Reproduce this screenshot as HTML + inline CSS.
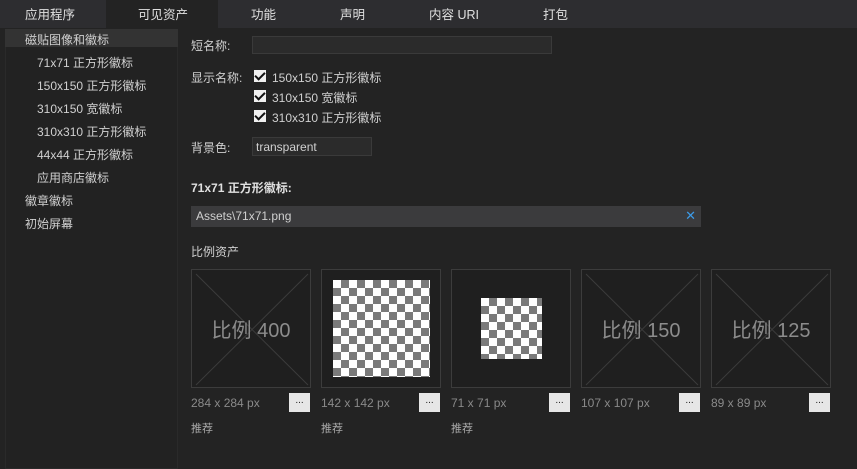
<!DOCTYPE html><html><head><meta charset="utf-8"><style>
*{margin:0;padding:0;box-sizing:border-box}
body{width:857px;height:469px;background:#232323;color:#d0d0d0;font:12px "Liberation Sans","Noto Sans CJK SC",sans-serif;position:relative;overflow:hidden}
.a{position:absolute;white-space:nowrap}
.tabs{position:absolute;left:0;top:0;width:857px;height:28px;background:#2d2d30}
.tab{position:absolute;top:0;height:28px;line-height:30px;font-size:12.5px;color:#e0e0e0}
.left{position:absolute;left:5px;top:29px;width:173px;height:440px;border:1px solid #2a2a2a;background:#222}
.sel{position:absolute;left:5px;top:29px;width:173px;height:18px;background:#333}
.in{position:absolute;background:#2b2b2b;border:1px solid #3a3a3a}
.cb{position:absolute;width:12px;height:12px;background:#f0f0f0}
.cb:after{content:"";position:absolute;left:3px;top:0px;width:4px;height:8px;border:solid #111;border-width:0 2px 2px 0;transform:rotate(45deg)}
.tile{position:absolute;top:269px;width:120px;height:119px;border:1px solid #3c3c3c;background:#1f1f1f;overflow:hidden}
.chk{position:absolute;background-color:#fff;background-image:linear-gradient(45deg,#7a7a7a 25%,transparent 25%,transparent 75%,#7a7a7a 75%),linear-gradient(45deg,#7a7a7a 25%,transparent 25%,transparent 75%,#7a7a7a 75%);background-size:16px 16px;background-position:0 0,8px 8px}
.btn{position:absolute;top:393px;width:21px;height:19px;background:#e6e6e6;color:#222;font-size:10px;text-align:center;line-height:16px}
.lbl{position:absolute;top:396px;color:#8a8a8a;font-size:12px}
.rec{position:absolute;top:420px;color:#aaa;font-size:11px}
.big{position:absolute;left:0;top:44px;width:118px;text-align:center;font-size:20px;color:#8c8c8c}
</style></head><body>
<div class="tabs"></div>
<div class="a" style="left:106px;top:0;width:112px;height:29px;background:#232323"></div>
<div class="tab" style="left:25px">应用程序</div>
<div class="tab" style="left:138px">可见资产</div>
<div class="tab" style="left:251px">功能</div>
<div class="tab" style="left:340px">声明</div>
<div class="tab" style="left:429px">内容 URI</div>
<div class="tab" style="left:543px">打包</div>
<div class="left"></div><div class="sel"></div>
<div class="a" style="left:25px;top:31px">磁贴图像和徽标</div>
<div class="a" style="left:37px;top:54px">71x71 正方形徽标</div>
<div class="a" style="left:37px;top:77px">150x150 正方形徽标</div>
<div class="a" style="left:37px;top:100px">310x150 宽徽标</div>
<div class="a" style="left:37px;top:123px">310x310 正方形徽标</div>
<div class="a" style="left:37px;top:146px">44x44 正方形徽标</div>
<div class="a" style="left:37px;top:169px">应用商店徽标</div>
<div class="a" style="left:25px;top:192px">徽章徽标</div>
<div class="a" style="left:25px;top:215px">初始屏幕</div>
<div class="a" style="left:191px;top:37px">短名称:</div>
<div class="in" style="left:252px;top:36px;width:300px;height:18px"></div>
<div class="a" style="left:191px;top:69px">显示名称:</div>
<div class="cb" style="left:254px;top:70px"></div><div class="a" style="left:272px;top:69px">150x150 正方形徽标</div>
<div class="cb" style="left:254px;top:90px"></div><div class="a" style="left:272px;top:89px">310x150 宽徽标</div>
<div class="cb" style="left:254px;top:110px"></div><div class="a" style="left:272px;top:109px">310x310 正方形徽标</div>
<div class="a" style="left:191px;top:139px">背景色:</div>
<div class="in" style="left:252px;top:137px;width:120px;height:19px;padding:2px 3px">transparent</div>
<div class="a" style="left:191px;top:179px;font-weight:bold;color:#e0e0e0">71x71 正方形徽标:</div>
<div class="a" style="left:191px;top:206px;width:510px;height:21px;background:#3b3b3d;padding:3px 5px">Assets\71x71.png<span style="position:absolute;right:5px;top:2px;color:#3c9be8;font-size:13px">✕</span></div>
<div class="a" style="left:191px;top:243px">比例资产</div>
<div class="tile" style="left:191px"><svg width="120" height="119" style="position:absolute;left:0;top:0"><line x1="4" y1="4" x2="116" y2="115" stroke="#3c3c3c"/><line x1="116" y1="4" x2="4" y2="115" stroke="#3c3c3c"/></svg><div class="big">比例 400</div></div>
<div class="tile" style="left:321px"><div class="chk" style="left:11px;top:10px;width:97px;height:97px"></div></div>
<div class="tile" style="left:451px"><div class="chk" style="left:29px;top:28px;width:61px;height:61px"></div></div>
<div class="tile" style="left:581px"><svg width="120" height="119" style="position:absolute;left:0;top:0"><line x1="4" y1="4" x2="116" y2="115" stroke="#3c3c3c"/><line x1="116" y1="4" x2="4" y2="115" stroke="#3c3c3c"/></svg><div class="big">比例 150</div></div>
<div class="tile" style="left:711px"><svg width="120" height="119" style="position:absolute;left:0;top:0"><line x1="4" y1="4" x2="116" y2="115" stroke="#3c3c3c"/><line x1="116" y1="4" x2="4" y2="115" stroke="#3c3c3c"/></svg><div class="big">比例 125</div></div>
<div class="lbl" style="left:191px">284 x 284 px</div><div class="btn" style="left:289px">...</div>
<div class="lbl" style="left:321px">142 x 142 px</div><div class="btn" style="left:419px">...</div>
<div class="lbl" style="left:451px">71 x 71 px</div><div class="btn" style="left:549px">...</div>
<div class="lbl" style="left:581px">107 x 107 px</div><div class="btn" style="left:679px">...</div>
<div class="lbl" style="left:711px">89 x 89 px</div><div class="btn" style="left:809px">...</div>
<div class="rec" style="left:191px">推荐</div><div class="rec" style="left:321px">推荐</div><div class="rec" style="left:451px">推荐</div>
</body></html>
